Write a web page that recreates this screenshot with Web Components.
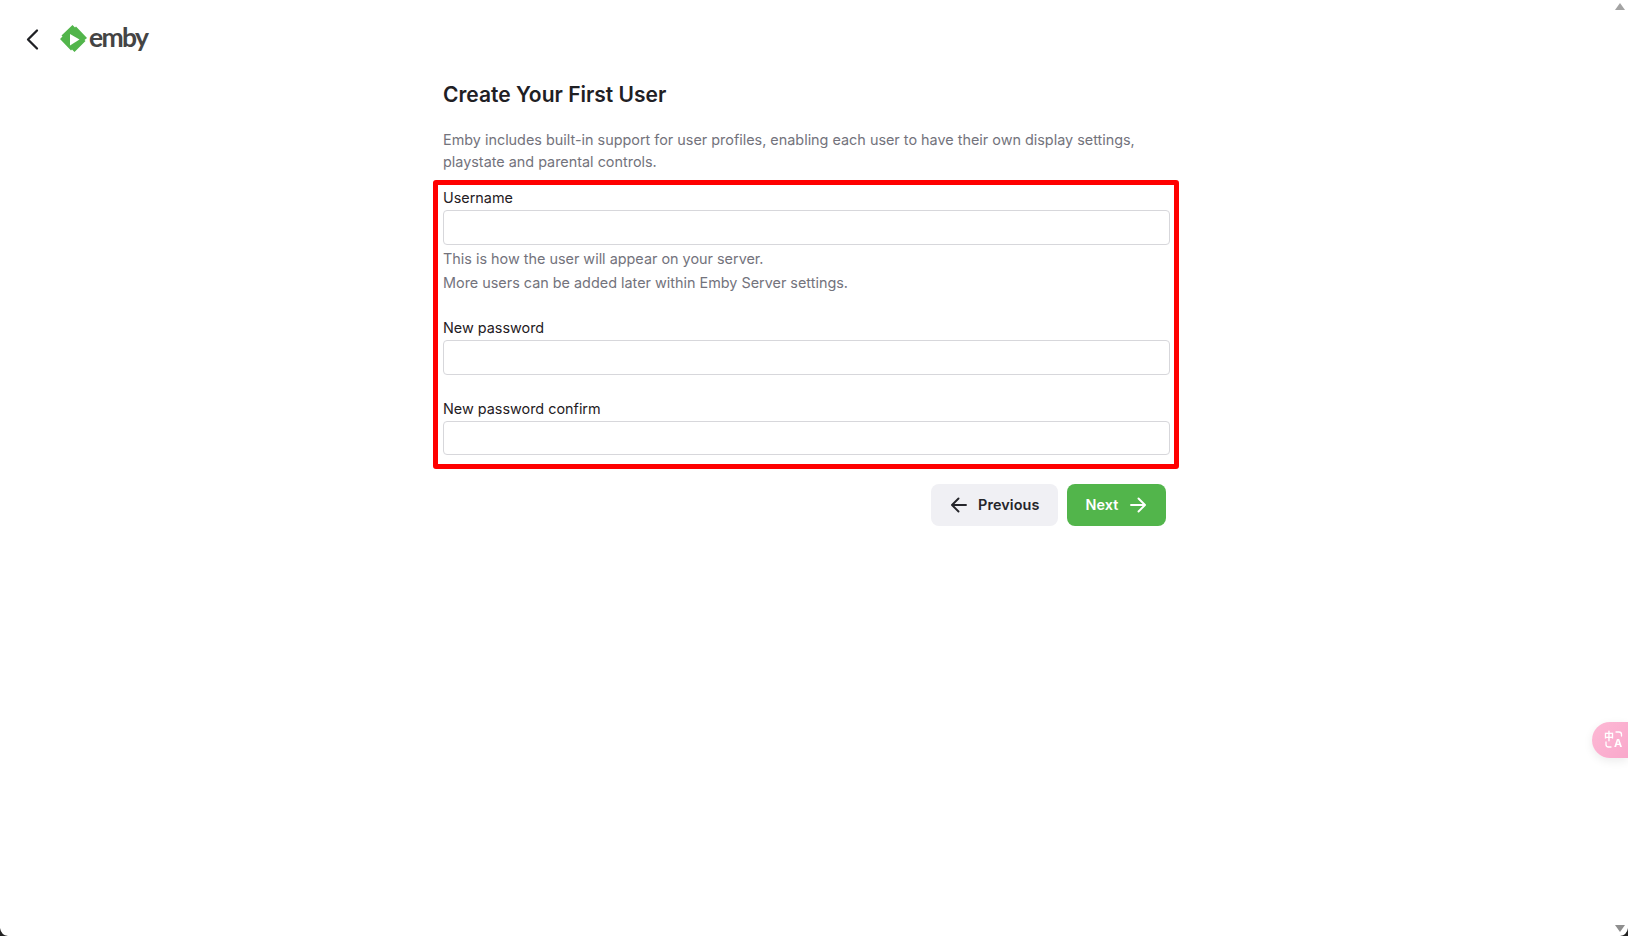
<!DOCTYPE html>
<html lang="en"><head><meta charset="utf-8"><title>Emby</title>
<style>
html,body{margin:0;height:100%;background:#fff;overflow:hidden}
body{font-family:Inter,"Liberation Sans",sans-serif;color:#1f2024}
</style></head><body>
<setup-app>
  <setup-header slot="header"></setup-header>
  <h-title slot="title">Create Your First User</h-title>
  <p-text slot="intro">Emby includes built-in support for user profiles, enabling each user to have their own display settings, playstate and parental controls.</p-text>
  <form-box slot="form">
    <form-field label="Username">
      <span>This is how the user will appear on your server.</span>
      <span>More users can be added later within Emby Server settings.</span>
    </form-field>
    <form-field label="New password"></form-field>
    <form-field label="New password confirm"></form-field>
  </form-box>
  <wizard-button slot="actions" kind="secondary" dir="back">Previous</wizard-button>
  <wizard-button slot="actions" kind="primary" dir="next">Next</wizard-button>
</setup-app>
<window-chrome></window-chrome>
<script>
function def(name, html, after){
  customElements.define(name, class extends HTMLElement{
    connectedCallback(){
      if(this.shadowRoot) return;
      const r=this.attachShadow({mode:'open'});
      r.innerHTML=html;
      if(after) after(this,r);
    }
  });
}
def('setup-app',`<style>
:host{display:block;height:936px;box-sizing:border-box}
.head{height:78px}
.col{width:746px;margin-left:433px;display:flex;flex-direction:column}
.actions{display:flex;justify-content:flex-end;gap:9px;padding:15px 13px 0 0}
</style>
<div class="head"><slot name="header"></slot></div>
<div class="col">
<slot name="title"></slot><slot name="intro"></slot><slot name="form"></slot>
<div class="actions"><slot name="actions"></slot></div>
</div>`);
def('setup-header',`<style>
:host{display:flex;align-items:center;height:78px;box-sizing:border-box;padding-left:24px}
.back{width:18px;height:24px;display:block}
.mark{width:28px;height:28px;margin-left:18px;display:block}
.word{font:700 26.500px/1 Lato,Inter,sans-serif;color:#444;letter-spacing:-1.700px;margin-left:1px;position:relative;top:-2px}
</style>
<svg class="back" viewBox="0 0 18 24"><path d="M13 3.500 4 12.500l9 9" fill="none" stroke="#1f2024" stroke-width="2.300" stroke-linecap="round" stroke-linejoin="round"/></svg>
<svg class="mark" viewBox="0 0 28 28"><path d="M12.500 0 15 2.500 16 1.500 27 13 24.500 15 25.500 16 14.500 27 12 24.500 11 25.500 0 14 2.500 11.500 1.500 10.500Z" fill="#52b54b"/><path d="M10 9v11.500L19.500 14.500Z" fill="#fff"/></svg>
<span class="word">emby</span>`);
def('h-title',`<style>
:host{display:block;padding-left:10px;font:600 21px/28px Inter,sans-serif;color:#1f2024;margin-top:3px}
</style><slot></slot>`);
def('p-text',`<style>
:host{display:block;padding:20px 20px 0 10px;font:400 14.400px/22px Inter,sans-serif;color:#73737c;margin-bottom:7px}
</style><slot></slot>`);
def('form-box',`<style>
:host{display:flex;flex-direction:column;box-sizing:border-box;width:746px;height:289px;border:5px solid #f00;border-radius:3px;padding:2px 4px 0 5px}
</style><slot></slot>`);
def('form-field',`<style>
:host{display:block;margin-bottom:23px}
label{display:block;font:400 14.400px/22px Inter,sans-serif;color:#1f2024;margin-bottom:1px}
.box{display:block;width:100%;height:34.500px;box-sizing:border-box;border:1px solid #d7d7db;border-radius:4px;background:#fff;outline:0;padding:0 8px;font:inherit}
.help{font:400 14.400px/24px Inter,sans-serif;color:#73737c;padding-top:2px;margin-bottom:-.500px}
.help ::slotted(span){display:block}
.help.empty{display:none}
</style><label></label><input class="box" type="text"><div class="help"><slot></slot></div>`,
(el,r)=>{
  r.querySelector('label').textContent=el.getAttribute('label');
  if(!el.children.length) r.querySelector('.help').classList.add('empty');
});
def('wizard-button',`<style>
:host{display:inline-flex;align-items:center;height:42px;box-sizing:border-box;border-radius:8px;font:600 14.400px/1 Inter,sans-serif;letter-spacing:.1px;gap:9px;padding:0 18.500px}
svg{width:20px;height:20px;display:block}
path{fill:none;stroke:currentColor;stroke-width:1.900;stroke-linecap:round;stroke-linejoin:round}
:host([kind=secondary]){background:#f0f0f4;color:#25252a}
:host([kind=primary]){background:#52b54b;color:#fff}
</style><svg class="l" viewBox="0 0 20 20"><path d="M17 10H3.500M9.500 3.500 3 10l6.500 6.500"/></svg><slot></slot><svg class="r" viewBox="0 0 20 20"><path d="M3 10h13.500M10.500 3.500 17 10l-6.500 6.500"/></svg>`,
(el,r)=>{ r.querySelector(el.getAttribute('dir')==='back'?'.r':'.l').remove(); });
def('window-chrome',`<style>
:host{display:block}
svg{position:fixed;display:block}
.up{right:3px;top:3px;width:10px;height:7px}
.down{right:3px;bottom:4px;width:10px;height:7px}
.cl{left:0;bottom:0;width:8px;height:8px}
.cr{right:0;bottom:0;width:8px;height:8px}
.pill{position:fixed;right:0;top:722px;width:36px;height:36px;box-sizing:border-box;padding:9px 0 0 12px;border-radius:18px 0 0 18px;background:linear-gradient(135deg,#fdb9d5,#f9a8cb);box-shadow:0 3px 10px rgba(0,0,0,.08)}
.icon{position:relative;display:block;width:19px;height:18px;color:#fff}
.icon svg{position:absolute;left:0;top:0;width:19px;height:18px}
.zh,.a{position:absolute;line-height:1;font-weight:700}
.zh{left:0;top:0;font:700 10px/1 "Noto Sans CJK SC",sans-serif}
.a{left:10px;top:7px;font:700 11px/1 Inter,sans-serif}
</style>
<svg class="up" viewBox="0 0 10 7"><path d="M5 0 10 7H0Z" fill="#a3a3a3"/></svg>
<svg class="down" viewBox="0 0 10 7"><path d="M0 0H10L5 7Z" fill="#8f8f8f"/></svg>
<svg class="cl" viewBox="0 0 8 8"><path d="M0 0Q1 7 8 8H0Z" fill="#222"/></svg>
<svg class="cr" viewBox="0 0 8 8"><path d="M8 0Q7 7 0 8H8Z" fill="#222"/></svg>
<div class="pill"><span class="icon"><svg viewBox="0 0 19 18"><path d="M12 1h3q2.500 0 2.500 2.500V5M2 11v2.500q0 2.500 2.500 2.500H7" fill="none" stroke="#fff" stroke-width="1.300" stroke-linecap="round"/></svg><span class="zh">中</span><span class="a">A</span></span></div>`);
</script>
</body></html>
